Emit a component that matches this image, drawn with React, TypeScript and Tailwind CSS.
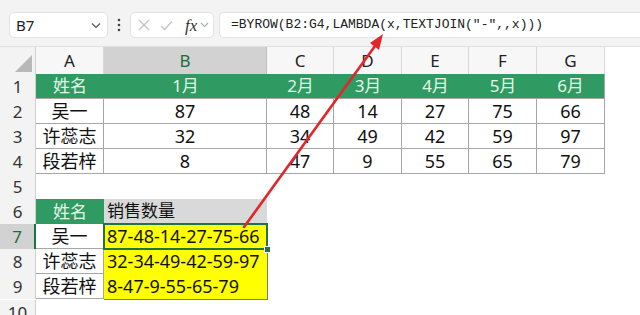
const cols = [68, 163, 67, 68, 67, 68, 68];
const letters = ["A", "B", "C", "D", "E", "F", "G"];

const font = { fontFamily: '"Noto Sans", "Noto Sans CJK SC", sans-serif' };

const data = [
  ["吴一", "87", "48", "14", "27", "75", "66"],
  ["许蕊志", "32", "34", "49", "42", "59", "97"],
  ["段若梓", "8", "47", "9", "55", "65", "79"],
];

const months = ["姓名", "1月", "2月", "3月", "4月", "5月", "6月"];

function RowHead({ n, active }: { n: number; active?: boolean }) {
  return (
    <div
      className={
        "flex h-[25px] w-[36px] shrink-0 items-center justify-center text-[17px] " +
        (active
          ? "border-r-2 border-r-[#217346] bg-[#d2d2d2] text-[#1d6b3f]"
          : "border-r border-r-[#d0d0d0] bg-[#f3f3f3] text-[#333]")
      }
    >
      {n}
    </div>
  );
}

function Arrow() {
  return (
    <svg className="pointer-events-none absolute left-0 top-0" width="640" height="315">
      <line x1="244" y1="227" x2="375" y2="46" stroke="#e2262b" strokeWidth="2.6" strokeLinecap="round" />
      <polygon points="383,34 379,50 370,43" fill="#e2262b" />
    </svg>
  );
}

export default function App() {
  return (
    <div className="relative h-[315px] w-[640px] overflow-hidden bg-white" style={font}>
      {/* formula bar */}
      <div className="flex h-[46px] items-center bg-[#f3f3f3] pl-[9px] pt-[4px]">
        <div className="flex h-[26px] w-[99px] items-center justify-between rounded-[5px] border border-[#e2e2e2] bg-white pl-[6px] pr-[6px]">
          <span className="text-[15px] text-[#222]">B7</span>
          <svg width="10" height="7" viewBox="0 0 10 7">
            <path d="M1 1.5 L5 5.5 L9 1.5" fill="none" stroke="#555" strokeWidth="1.2" />
          </svg>
        </div>
        <div className="flex w-[22px] justify-center">
          <svg width="4" height="14" viewBox="0 0 4 14">
            <circle cx="2" cy="2" r="1.3" fill="#444" />
            <circle cx="2" cy="7" r="1.3" fill="#444" />
            <circle cx="2" cy="12" r="1.3" fill="#444" />
          </svg>
        </div>
        <div className="flex h-[26px] w-[84px] items-center rounded-[5px] border border-[#e2e2e2] bg-white pl-[7px]">
          <svg width="12" height="12" viewBox="0 0 12 12">
            <path d="M1 1 L11 11 M11 1 L1 11" stroke="#c4c4c4" strokeWidth="1.3" />
          </svg>
          <svg className="ml-[10px]" width="13" height="11" viewBox="0 0 13 11">
            <path d="M1 6 L4.5 9.5 L12 1.5" fill="none" stroke="#c4c4c4" strokeWidth="1.3" />
          </svg>
          <span
            className="ml-[12px] text-[17px] italic leading-none text-[#333]"
            style={{ fontFamily: '"Liberation Serif", serif' }}
          >
            fx
          </span>
          <svg className="ml-[3px]" width="9" height="6" viewBox="0 0 9 6">
            <path d="M1 1 L4.5 4.5 L8 1" fill="none" stroke="#aaa" strokeWidth="1.1" />
          </svg>
        </div>
        <div className="ml-[5px] flex h-[26px] flex-1 items-center rounded-l-[5px] border border-r-0 border-[#e2e2e2] bg-white pl-[11px]">
          <span className="text-[13px] text-[#222]" style={{ fontFamily: '"Liberation Mono", monospace' }}>
            =BYROW(B2:G4,LAMBDA(x,TEXTJOIN("-",,x)))
          </span>
        </div>
      </div>

      {/* column headers */}
      <div className="flex h-[28px] border-t border-[#e0e0e0]">
        <div className="relative w-[36px] shrink-0 border-r border-[#d0d0d0] bg-[#f3f3f3]">
          <svg className="absolute bottom-[2px] right-[3px]" width="17" height="17" viewBox="0 0 17 17">
            <polygon points="17,0 17,17 0,17" fill="#b8b8b8" />
          </svg>
        </div>
        {letters.map((l, i) => (
          <div
            key={l}
            style={{ width: cols[i] }}
            className={
              "flex shrink-0 items-center justify-center border-r text-[17px] " +
              (i === 1
                ? "border-[#bdbdbd] bg-[#d2d2d2] text-[#1d6b3f]"
                : "border-[#d8d8d8] bg-[#f7f7f7] text-[#222]")
            }
          >
            {l}
          </div>
        ))}
        <div className="flex-1 bg-white" />
      </div>

      {/* row 1 */}
      <div className="flex">
        <RowHead n={1} />
        <div className="flex border-b border-r border-[#a6a6a6] bg-[#2f9a62]">
          {months.map((m, i) => (
            <div
              key={m}
              style={{ width: i === 6 ? cols[i] - 1 : cols[i] }}
              className="flex h-[24px] items-center justify-center text-[17px] text-[#e4f5e9]"
            >
              {m}
            </div>
          ))}
        </div>
      </div>

      {/* rows 2-4 */}
      {data.map((r, ri) => (
        <div key={ri} className="flex">
          <RowHead n={ri + 2} />
          {r.map((v, i) => (
            <div
              key={i}
              style={{ width: cols[i] }}
              className="flex h-[25px] shrink-0 items-center justify-center border-b border-r border-[#a6a6a6] text-[18px] text-[#111]"
            >
              {v}
            </div>
          ))}
        </div>
      ))}

      {/* row 5 */}
      <div className="flex">
        <RowHead n={5} />
      </div>

      {/* row 6 */}
      <div className="flex">
        <RowHead n={6} />
        <div className="flex h-[25px] w-[68px] items-center justify-center bg-[#2f9a62] text-[17px] text-[#e4f5e9]">
          姓名
        </div>
        <div className="flex h-[25px] w-[163px] items-center border-b border-[#a6a6a6] bg-[#d9d9d9] pl-[3px] text-[17px] text-[#111]">
          销售数量
        </div>
      </div>

      {/* rows 7-9 */}
      <div className="flex">
        <div className="flex flex-col">
          <RowHead n={7} active />
          <RowHead n={8} />
          <RowHead n={9} />
        </div>
        <div className="flex w-[68px] flex-col">
          {["吴一", "许蕊志", "段若梓"].map((n) => (
            <div
              key={n}
              className="flex h-[25px] items-center justify-center border-b border-r border-[#a6a6a6] text-[18px] text-[#111]"
            >
              {n}
            </div>
          ))}
        </div>
        <div className="relative flex w-[164px] flex-col border-b border-r border-[#7a7a7a] bg-[#ffff00]">
          {["87-48-14-27-75-66", "32-34-49-42-59-97", "8-47-9-55-65-79"].map((t) => (
            <div key={t} className="flex h-[25px] items-center pl-[3px] text-[18px] text-[#111]">
              {t}
            </div>
          ))}
          <div className="absolute -left-[1px] -top-[1px] h-[27px] w-[165px] border-2 border-[#217346]" />
          <div className="absolute left-[160px] top-[22px] h-[7px] w-[7px] border border-white bg-[#217346]" />
        </div>
      </div>

      {/* row 10 */}
      <div className="flex">
        <RowHead n={10} />
      </div>

      <Arrow />
    </div>
  );
}
